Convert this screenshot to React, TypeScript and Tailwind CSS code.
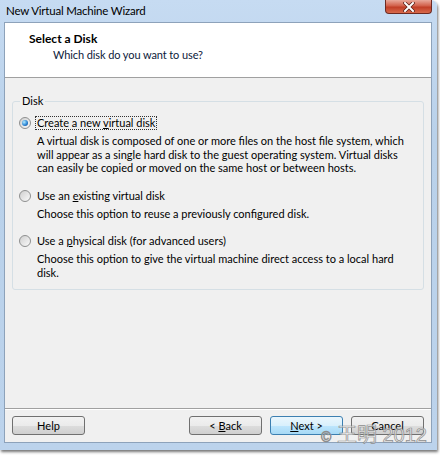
import type { ReactNode } from 'react'

interface Option {
  id: number
  label: ReactNode
  desc: string
  checked?: boolean
}

const options: Option[] = [
  {
    id: 1,
    label: <>Create a new <u>v</u>irtual disk</>,
    desc: 'A virtual disk is composed of one or more files on the host file system, which will appear as a single hard disk to the guest operating system. Virtual disks can easily be copied or moved on the same host or between hosts.',
    checked: true,
  },
  {
    id: 2,
    label: <>Use an <u>e</u>xisting virtual disk</>,
    desc: 'Choose this option to reuse a previously configured disk.',
  },
  {
    id: 3,
    label: <>Use a <u>p</u>hysical disk (for advanced users)</>,
    desc: 'Choose this option to give the virtual machine direct access to a local hard disk.',
  },
]

const Radio = ({ checked }: { checked?: boolean }) => (
  <span className="w-[12px] h-[12px] rounded-full border border-[#8e8f8f] bg-[linear-gradient(135deg,#cfcfcf,#fafafa)] flex items-center justify-center shrink-0">
    {checked && (
      <span className="w-[6px] h-[6px] rounded-full bg-[radial-gradient(circle_at_35%_35%,#b4ecff,#2c86d6_55%,#0e3f7c)]" />
    )}
  </span>
)

const Button = ({ children, primary }: { children: ReactNode; primary?: boolean }) => (
  <button
    className={
      primary
        ? 'w-[73px] h-[19px] rounded-[3px] border border-[#3c7fb1] bg-[linear-gradient(to_bottom,#eaf6fd_0%,#d9f0fc_50%,#bee6fd_51%,#a7d9f5_100%)] text-[11px] leading-[17px] text-black'
        : 'w-[73px] h-[19px] rounded-[3px] border border-[#707070] bg-[linear-gradient(to_bottom,#f2f2f2_0%,#ebebeb_50%,#dddddd_51%,#cfcfcf_100%)] text-[11px] leading-[17px] text-black'
    }
  >
    {children}
  </button>
)

export default function App() {
  return (
    <div className="w-[440px] h-[456px] bg-white relative font-['Lato','Noto_Sans',sans-serif]">
      <div className="w-[437px] h-[450px] flex flex-col bg-[linear-gradient(to_bottom,#c6dbf2,#b9d1ea_30%,#bcd3ec)] shadow-[1px_2px_3px_rgba(0,0,0,0.55)] rounded-tr-[6px]">
        {/* title bar */}
        <div className="h-[22px] flex items-start justify-between shrink-0">
          <span className="pl-[6px] pt-[1px] text-[11.5px] tracking-[-0.2px] leading-[20px] text-black">New Virtual Machine Wizard</span>
          <div className="w-[47px] h-[14px] mr-[5px] rounded-b-[4px] border border-t-0 border-[#6d2a22] bg-[linear-gradient(to_bottom,#e9a99b,#d2604a_45%,#c13e27_55%,#d86a4c)] flex items-center justify-center">
            <svg width="12" height="10" viewBox="0 0 12 10">
              <path d="M2 1 L10 9 M10 1 L2 9" stroke="#5a1e16" strokeWidth="3.4" strokeLinecap="square" />
              <path d="M2 1 L10 9 M10 1 L2 9" stroke="#ffffff" strokeWidth="2" strokeLinecap="square" />
            </svg>
          </div>
        </div>

        {/* client area */}
        <div className="ml-[4px] mr-[5px] h-[421px] flex flex-col border border-[#8da2ba] bg-[#f0f0f0]">
          <div className="h-[55px] shrink-0 bg-white border-b border-[#a0a0a0] pt-[9px]">
            <div className="pl-[24px] text-[12px] leading-[14px] font-bold text-black">Select a Disk</div>
            <div className="pl-[48px] pt-[2px] text-[11px] tracking-[-0.1px] leading-[14px] text-[#0c1a3a]">Which disk do you want to use?</div>
          </div>

          <div className="flex-1 px-[7px] pt-[16px]">
            <fieldset className="border border-[#d5dfe5] rounded-[3px] pl-[6px] pr-[6px] pb-[10px] w-[412px]">
              <legend className="ml-[1px] px-[2px] text-[11px] leading-[14px] text-black">Disk</legend>
              <div className="pt-[8px] flex flex-col gap-[14px]">
                {options.map((o) => (
                  <div key={o.id} className="flex flex-col">
                    <div className="flex items-center gap-[4px] h-[14px]">
                      <Radio checked={o.checked} />
                      <span
                        className={
                          o.checked
                            ? 'px-[1px] text-[11px] leading-[12px] text-black border border-dotted border-[#333]'
                            : 'px-[1px] text-[11px] leading-[12px] text-black border border-transparent'
                        }
                      >
                        {o.label}
                      </span>
                    </div>
                    <p className="pl-[18px] pr-[4px] pt-[4px] text-[11px] leading-[13.5px] text-black">{o.desc}</p>
                  </div>
                ))}
              </div>
            </fieldset>
          </div>

          <div className="h-[34px] shrink-0 border-t border-[#a0a0a0] shadow-[inset_0_1px_0_#ffffff] flex items-start pt-[7px] pl-[7px] pr-[7px]">
            <Button>Help</Button>
            <div className="flex-1" />
            <div className="flex gap-[8px]">
              <Button>&lt; <u>B</u>ack</Button>
              <Button primary><u>N</u>ext &gt;</Button>
              <Button>Cancel</Button>
            </div>
          </div>
        </div>
      </div>

      {/* watermark */}
      <div className="absolute left-[321px] top-[423px] text-[20px] leading-[24px] text-[rgba(255,255,255,0.55)] [-webkit-text-stroke:0.7px_#8c8c8c] font-['Liberation_Sans','Noto_Sans_CJK_SC',sans-serif] whitespace-nowrap">
        <span className="text-[14px]">©</span> 王明 2012
      </div>
    </div>
  )
}
